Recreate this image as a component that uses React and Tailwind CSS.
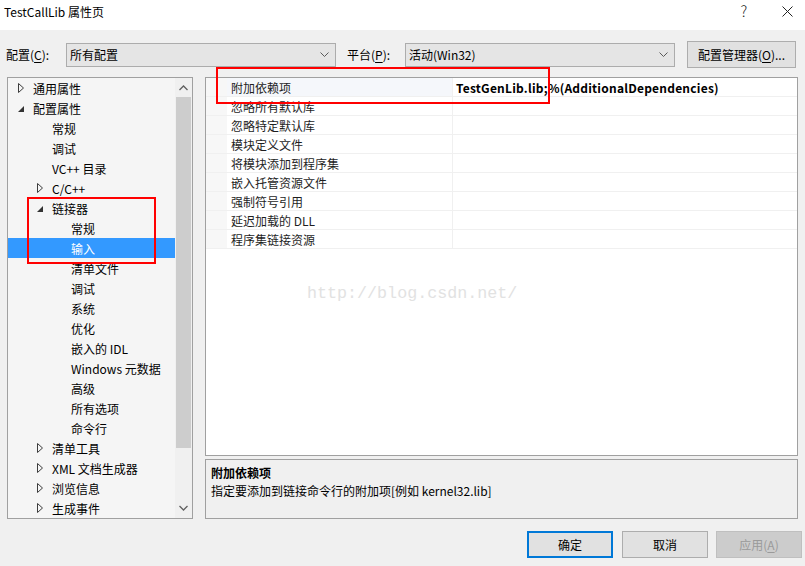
import React from 'react';

const FONT = { fontFamily: '"Noto Sans CJK SC", "Noto Sans", sans-serif' };

const tree = [
  { t: '通用属性', l: 0, a: 'c' },
  { t: '配置属性', l: 0, a: 'o' },
  { t: '常规', l: 1 },
  { t: '调试', l: 1 },
  { t: 'VC++ 目录', l: 1 },
  { t: 'C/C++', l: 1, a: 'c' },
  { t: '链接器', l: 1, a: 'o' },
  { t: '常规', l: 2 },
  { t: '输入', l: 2, s: true },
  { t: '清单文件', l: 2 },
  { t: '调试', l: 2 },
  { t: '系统', l: 2 },
  { t: '优化', l: 2 },
  { t: '嵌入的 IDL', l: 2 },
  { t: 'Windows 元数据', l: 2 },
  { t: '高级', l: 2 },
  { t: '所有选项', l: 2 },
  { t: '命令行', l: 2 },
  { t: '清单工具', l: 1, a: 'c' },
  { t: 'XML 文档生成器', l: 1, a: 'c' },
  { t: '浏览信息', l: 1, a: 'c' },
  { t: '生成事件', l: 1, a: 'c' },
];

const indent = ['pl-[10px]', 'pl-[29px]', 'pl-[48px]'];

const props = [
  '附加依赖项',
  '忽略所有默认库',
  '忽略特定默认库',
  '模块定义文件',
  '将模块添加到程序集',
  '嵌入托管资源文件',
  '强制符号引用',
  '延迟加载的 DLL',
  '程序集链接资源',
];

function Arrow({ a }) {
  if (a === 'c') {
    return (
      <svg width="7" height="10" viewBox="0 0 7 10" className="block">
        <polygon points="0.5,0.5 5.5,5 0.5,9.5" fill="none" stroke="#3c3c3c" strokeWidth="1" />
      </svg>
    );
  }
  if (a === 'o') {
    return (
      <svg width="7" height="10" viewBox="0 0 7 10" className="block">
        <polygon points="6,3 6,9 0,9" fill="#333" />
      </svg>
    );
  }
  return null;
}

function Chevron({ up }) {
  return (
    <svg width="9" height="6" viewBox="0 0 9 6" className="block">
      <polyline
        points={up ? '0.5,5 4.5,1 8.5,5' : '0.5,1 4.5,5 8.5,1'}
        fill="none"
        stroke="#606060"
        strokeWidth="1.3"
      />
    </svg>
  );
}

function Combo({ text }) {
  return (
    <div className="h-[24px] w-[270px] bg-[#e5e5e5] border border-[#acacac] flex items-center pl-[3px] pr-[6px] text-[12px] text-black">
      <span className="flex-1 leading-[18px] pt-[1px]">{text}</span>
      <svg width="9" height="6" viewBox="0 0 9 6" className="block">
        <polyline points="0.5,0.5 4.5,4.5 8.5,0.5" fill="none" stroke="#5a5a5a" strokeWidth="1" />
      </svg>
    </div>
  );
}

export default function App() {
  return (
    <div
      className="relative w-[805px] h-[566px] bg-[#f0f0f0] flex flex-col overflow-hidden text-[12px] text-black"
      style={FONT}
    >
      {/* title bar */}
      <div className="h-[30px] bg-white flex items-center shrink-0">
        <span className="pl-[4px] pb-[6px] leading-[18px]">TestCallLib 属性页</span>
        <div className="flex-1" />
        <span className="w-[14px] text-center text-[15px] leading-[18px] pb-[8px] mr-[31px] font-light text-[#222]">?</span>
        <svg width="11" height="11" viewBox="0 0 11 11" className="block mr-[12px] mb-[7px]">
          <line x1="0.5" y1="0.5" x2="10.5" y2="10.5" stroke="#222" strokeWidth="1" />
          <line x1="10.5" y1="0.5" x2="0.5" y2="10.5" stroke="#222" strokeWidth="1" />
        </svg>
      </div>

      {/* toolbar */}
      <div className="mt-[11px] h-[27px] flex items-center shrink-0">
        <span className="pl-[6px] w-[66px] leading-[18px] pt-[1px]">
          配置(<u className="underline-offset-2">C</u>):
        </span>
        <Combo text="所有配置" />
        <span className="pl-[11px] w-[69px] leading-[18px] pt-[1px]">
          平台(<u className="underline-offset-2">P</u>):
        </span>
        <Combo text="活动(Win32)" />
        <div className="ml-[12px] h-[27px] w-[109px] bg-[#e1e1e1] border border-[#adadad] flex items-center justify-center leading-[18px]">
          <span className="pt-[1px]">
            配置管理器(<u className="underline-offset-2">O</u>)...
          </span>
        </div>
      </div>

      {/* main */}
      <div className="mt-[9px] flex h-[442px] shrink-0">
        {/* tree */}
        <div className="ml-[7px] w-[186px] h-[442px] border border-[#a0a0a0] bg-[#f5f5f5] flex">
          <div className="flex-1 flex flex-col">
            {tree.map((n, i) => (
              <div
                key={i}
                className={`h-[20px] shrink-0 flex items-center ${indent[n.l]} ${n.s ? 'bg-[#3399ff] text-white' : ''}`}
              >
                <div className="w-[15px] shrink-0 flex items-center">
                  <Arrow a={n.a} />
                </div>
                <span className="leading-[18px] pt-[2px] whitespace-nowrap">{n.t}</span>
              </div>
            ))}
          </div>
          {/* scrollbar */}
          <div className="w-[17px] bg-[#f0f0f0] flex flex-col items-center">
            <div className="h-[19px] w-full flex items-center justify-center">
              <Chevron up />
            </div>
            <div className="w-[15px] h-[351px] bg-[#cdcdcd]" />
            <div className="flex-1" />
            <div className="h-[19px] w-full flex items-center justify-center mb-[1px]">
              <Chevron />
            </div>
          </div>
        </div>

        {/* right column */}
        <div className="ml-[12px] w-[593px] flex flex-col">
          <div className="h-[379px] border border-[#a0a0a0] bg-white flex flex-col">
            {props.map((p, i) => (
              <div key={i} className="h-[19px] shrink-0 flex border-b border-[#f0f0f0]">
                <div className="w-[21px] bg-[#f7f7f7]" />
                <div
                  className={`w-[226px] flex items-center pl-[4px] border-r border-[#f0f0f0] ${i === 0 ? 'bg-[#f5f7fb]' : ''}`}
                >
                  <span className="leading-[18px] pt-[2px] whitespace-nowrap text-[#1e1e1e]">{p}</span>
                </div>
                <div className="flex-1 flex items-center pl-[3px]">
                  {i === 0 && (
                    <span className="font-bold leading-[18px] pt-[2px] whitespace-nowrap tracking-[0.22px]">
                      TestGenLib.lib;%(AdditionalDependencies)
                    </span>
                  )}
                </div>
              </div>
            ))}
          </div>
          <div className="mt-[3px] h-[60px] border border-[#a0a0a0] bg-[#f0f0f0] pl-[5px] pt-[4px]">
            <div className="font-bold leading-[18px]">附加依赖项</div>
            <div className="leading-[18px]">指定要添加到链接命令行的附加项[例如 kernel32.lib]</div>
          </div>
        </div>
      </div>

      {/* footer */}
      <div className="mt-[12px] flex h-[27px] shrink-0">
        <div className="ml-[527px] w-[86px] h-[27px] border-2 border-[#0078d7] bg-[#e1e1e1] flex items-center justify-center leading-[18px]">
          <span className="pt-[1px]">确定</span>
        </div>
        <div className="ml-[9px] w-[86px] h-[27px] border border-[#adadad] bg-[#e1e1e1] flex items-center justify-center leading-[18px]">
          <span className="pt-[1px]">取消</span>
        </div>
        <div className="ml-[8px] w-[86px] h-[27px] border border-[#bfbfbf] bg-[#cccccc] text-[#9a9a9a] flex items-center justify-center leading-[18px]">
          <span className="pt-[1px]">
            应用(<u className="underline-offset-2">A</u>)
          </span>
        </div>
      </div>

      {/* watermark */}
      <div
        className="absolute left-[307px] top-[284px] text-[16.7px] leading-[20px] text-[#e2e2e2] whitespace-nowrap"
        style={{ fontFamily: '"Liberation Mono", monospace' }}
      >
        http://blog.csdn.net/
      </div>

      {/* red annotation boxes */}
      <div className="absolute left-[27px] top-[197px] w-[129px] h-[67px] border-2 border-[#ff0000]" />
      <div className="absolute left-[216px] top-[67px] w-[334px] h-[37px] border-2 border-[#ff0000]" />
    </div>
  );
}
